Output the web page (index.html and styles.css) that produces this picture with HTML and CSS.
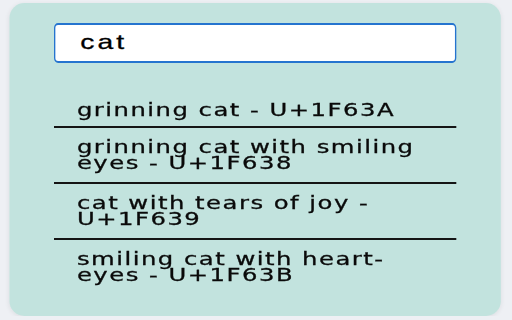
FILE: index.html
```html
<!DOCTYPE html>
<html lang="en">
<head>
    <meta charset="UTF-8">
    <title>Cat emoji search</title>
    <link rel="stylesheet" href="styles.css">
</head>
<body>
    <div class="stage">
        <div class="card">
            <input type="text" class="search" value="cat">
            <ul class="results">
                <li class="item">grinning cat - U+1F63A</li>
                <li class="item">grinning cat with smiling eyes - U+1F638</li>
                <li class="item">cat with tears of joy - U+1F639</li>
                <li class="item">smiling cat with heart-eyes - U+1F63B</li>
            </ul>
        </div>
    </div>
</body>
</html>
```

FILE: styles.css
```css
body{
    margin:0;
    background-color:#eef0f4;
    overflow:hidden;
}
/* the capture is stretched sideways, so the whole popup is too */
.stage{
    width:379px;
    transform:scaleX(1.35);
    transform-origin:0 0;
}
.card{
    margin:3px 0 0 6.7px;
    width:364.4px;
    height:313px;
    box-sizing:border-box;
    padding:20px 0 0 33.3px;
    background-color:#c2e3de;
    border-radius:11px / 15px;
    box-shadow:0 1px 5px rgba(0,0,0,0.08);
}
.search{
    display:block;
    width:297.8px;
    height:40px;
    box-sizing:border-box;
    margin:0;
    padding:0 0 2px 18.5px;
    border-style:solid;
    border-color:#2574cf;
    border-width:2.5px 1.8px;
    border-radius:3px / 5px;
    background:white;
    font-family:"Liberation Sans", Arial, sans-serif;
    font-size:21px;
    letter-spacing:2.2px;
    color:#000;
    -webkit-text-stroke:0.3px #000;
    outline:none;
}
.results{
    list-style:none;
    margin:26px 0 0 0;
    padding:0;
    width:297.8px;
}
.item{
    padding:11px 17px;
    border-bottom:2px solid #151515;
    font-family:"DejaVu Sans", Verdana, sans-serif;
    font-size:18px;
    letter-spacing:1.1px;
    line-height:16px;
    color:#0a0a0a;
    -webkit-text-stroke:0.3px #0a0a0a;
}
.item:first-child{
    padding:13px 17px 8px;
}
.item:last-child{
    border-bottom:none;
}
```
